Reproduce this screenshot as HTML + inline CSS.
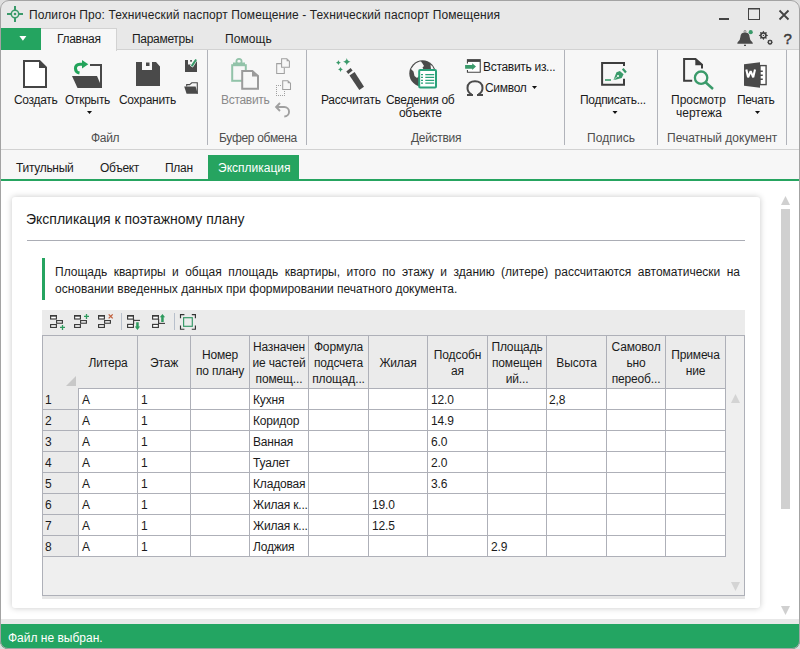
<!DOCTYPE html>
<html><head><meta charset="utf-8">
<style>
*{box-sizing:border-box}
html,body{margin:0;padding:0}
body{width:800px;height:649px;overflow:hidden;position:relative;background:#fff;font-family:"Liberation Sans",sans-serif;font-size:12px;color:#1b1b1b}
.a{position:absolute;white-space:nowrap;line-height:14px}
.b{position:absolute}
#frame{position:absolute;left:0;top:0;width:800px;height:649px;border:1px solid #a3a3a3;border-radius:9px 9px 8px 8px;box-shadow:0 0 0 12px #dedede;z-index:100;pointer-events:none}
.sep{position:absolute;width:1px;background:#b1b3ba}
.rl{letter-spacing:-0.3px}
.gl{color:#4e4e4e;letter-spacing:-0.3px}
.vl{position:absolute;width:1px;background:#aeb0b8}
.hl{position:absolute;height:1px;background:#aeb0b8}
.hd{position:absolute;text-align:center;line-height:16px;white-space:nowrap;letter-spacing:-0.15px}
.cell{position:absolute;white-space:nowrap;line-height:14px;letter-spacing:-0.18px}
svg{position:absolute;overflow:visible}
</style></head><body>
<div class="b" style="left:0;top:0;width:800px;height:50px;background:#e8e8e8"></div>
<div class="b" style="left:0;top:49px;width:800px;height:101px;background:#f7f7f7;border-top:1px solid #d2d2d2;border-bottom:1px solid #d2d2d2"></div>
<div class="b" style="left:0;top:150px;width:800px;height:29px;background:#f7f7f7"></div>
<div class="b" style="left:0;top:179px;width:800px;height:2px;background:#26a460"></div>
<div class="b" style="left:0;top:619px;width:800px;height:5px;background:#e8e8e8"></div>
<div class="b" style="left:0;top:624px;width:800px;height:25px;background:#23a562"></div>
<div class="a" style="left:29px;top:8px;letter-spacing:0.1px;color:#222">Полигон Про: Технический паспорт Помещение - Технический паспорт Помещения</div>
<div class="b" style="left:1px;top:28px;width:40px;height:22px;background:#24a460"></div>
<div class="b" style="left:41px;top:28px;width:76px;height:23px;background:#f7f7f7;border:1px solid #d2d2d2;border-bottom:none;border-left:none"></div>
<div class="a rl" style="left:57px;top:32px;">Главная</div>
<div class="a rl" style="left:132px;top:32px;">Параметры</div>
<div class="a rl" style="left:225px;top:32px;letter-spacing:0.1px">Помощь</div>
<div class="a rl" style="left:14px;top:93px;">Создать</div>
<div class="a rl" style="left:65px;top:93px;">Открыть</div>
<div class="a rl" style="left:119px;top:93px;">Сохранить</div>
<div class="a rl" style="left:221px;top:93px;color:#8a8a8a">Вставить</div>
<div class="a rl" style="left:321px;top:93px;">Рассчитать</div>
<div class="a rl" style="left:386px;top:93px;">Сведения об</div>
<div class="a rl" style="left:399px;top:106px;">объекте</div>
<div class="a rl" style="left:483px;top:60px;">Вставить из...</div>
<div class="a rl" style="left:485px;top:81px;">Символ</div>
<div class="a rl" style="left:580px;top:93px;">Подписать...</div>
<div class="a rl" style="left:671px;top:93px;letter-spacing:0">Просмотр</div>
<div class="a rl" style="left:676px;top:106px;letter-spacing:0">чертежа</div>
<div class="a rl" style="left:737px;top:93px;">Печать</div>
<div class="a gl" style="left:91px;top:131px;">Файл</div>
<div class="a gl" style="left:219px;top:131px;">Буфер обмена</div>
<div class="a gl" style="left:411px;top:131px;">Действия</div>
<div class="a gl" style="left:587px;top:131px;letter-spacing:0.1px">Подпись</div>
<div class="a gl" style="left:667px;top:131px;letter-spacing:0">Печатный документ</div>
<div class="sep" style="left:207px;top:50px;height:95px"></div>
<div class="sep" style="left:306px;top:50px;height:95px"></div>
<div class="sep" style="left:564px;top:50px;height:95px"></div>
<div class="sep" style="left:657px;top:50px;height:95px"></div>
<div class="sep" style="left:786px;top:50px;height:95px"></div>
<div class="a rl" style="left:16px;top:161px">Титульный</div>
<div class="a rl" style="left:100px;top:161px">Объект</div>
<div class="a rl" style="left:165px;top:161px">План</div>
<div class="b" style="left:208px;top:155px;width:91px;height:25px;background:#26a460"></div>
<div class="a rl" style="left:218px;top:161px;color:#fff;letter-spacing:0">Экспликация</div>
<div class="b" style="left:12px;top:197px;width:748px;height:411px;background:#fff;border-radius:3px;box-shadow:0 0 6px rgba(0,0,0,0.22)"></div>
<div class="a" style="left:26px;top:211px;font-size:14px;line-height:16px;color:#1b1b1b">Экспликация к поэтажному плану</div>
<div class="b" style="left:27px;top:240px;width:718px;height:1px;background:#abadb5"></div>
<div class="b" style="left:42px;top:258px;width:3px;height:42px;background:#26a460"></div>
<div class="a" style="left:55px;top:264px;width:685px;line-height:16px;text-align:justify;text-align-last:justify;white-space:normal">Площадь квартиры и общая площадь квартиры, итого по этажу и зданию (литере) рассчитаются автоматически на</div>
<div class="a" style="left:55px;top:281px;line-height:16px">основании введенных данных при формировании печатного документа.</div>
<div class="b" style="left:42px;top:310px;width:703px;height:25px;background:#ebebeb"></div>
<div class="b" style="left:42px;top:335px;width:703px;height:261px;background:#efefef;border:1px solid #aeb0b8"></div>
<div class="b" style="left:79px;top:389px;width:646px;height:167px;background:#fff"></div>
<div class="b" style="left:43px;top:336px;width:683px;height:52px;background:#ebebeb"></div>
<div class="b" style="left:43px;top:388px;width:35px;height:168px;background:#ebebeb"></div>
<div class="b" style="left:42px;top:596px;width:703px;height:3px;background:#e6e6e6"></div>
<div class="vl" style="left:78px;top:389px;height:168px"></div>
<div class="vl" style="left:137px;top:336px;height:221px"></div>
<div class="vl" style="left:190px;top:336px;height:221px"></div>
<div class="vl" style="left:249px;top:336px;height:221px"></div>
<div class="vl" style="left:308px;top:336px;height:221px"></div>
<div class="vl" style="left:368px;top:336px;height:221px"></div>
<div class="vl" style="left:427px;top:336px;height:221px"></div>
<div class="vl" style="left:487px;top:336px;height:221px"></div>
<div class="vl" style="left:546px;top:336px;height:221px"></div>
<div class="vl" style="left:606px;top:336px;height:221px"></div>
<div class="vl" style="left:665px;top:336px;height:221px"></div>
<div class="vl" style="left:725px;top:336px;height:221px"></div>
<div class="vl" style="left:725px;top:336px;height:221px"></div>
<div class="hl" style="left:78px;top:388px;width:648px"></div>
<div class="hl" style="left:43px;top:409px;width:683px"></div>
<div class="hl" style="left:43px;top:430px;width:683px"></div>
<div class="hl" style="left:43px;top:451px;width:683px"></div>
<div class="hl" style="left:43px;top:472px;width:683px"></div>
<div class="hl" style="left:43px;top:493px;width:683px"></div>
<div class="hl" style="left:43px;top:514px;width:683px"></div>
<div class="hl" style="left:43px;top:535px;width:683px"></div>
<div class="hl" style="left:43px;top:556px;width:683px"></div>
<svg style="left:66px;top:376px" width="10" height="10"><path d="M10 0 L10 10 L0 10 Z" fill="#c8c8c8"/></svg>
<div class="hd" style="left:79px;top:355.2px;width:58px">Литера</div>
<div class="hd" style="left:138px;top:355.2px;width:52px">Этаж</div>
<div class="hd" style="left:191px;top:347.2px;width:58px">Номер<br>по плану</div>
<div class="hd" style="left:250px;top:339.2px;width:58px">Назначен<br>ие частей<br>помещ...</div>
<div class="hd" style="left:309px;top:339.2px;width:59px">Формула<br>подсчета<br>площад...</div>
<div class="hd" style="left:369px;top:355.2px;width:58px">Жилая</div>
<div class="hd" style="left:428px;top:347.2px;width:59px">Подсобн<br>ая</div>
<div class="hd" style="left:488px;top:339.2px;width:58px">Площадь<br>помещен<br>ий...</div>
<div class="hd" style="left:547px;top:355.2px;width:59px">Высота</div>
<div class="hd" style="left:607px;top:339.2px;width:58px">Самовол<br>ьно<br>переоб...</div>
<div class="hd" style="left:666px;top:347.2px;width:59px">Примеча<br>ние</div>
<div class="cell" style="left:45px;top:392.8px">1</div>
<div class="cell" style="left:82px;top:392.8px">A</div>
<div class="cell" style="left:141px;top:392.8px">1</div>
<div class="cell" style="left:253px;top:392.8px">Кухня</div>
<div class="cell" style="left:431px;top:392.8px">12.0</div>
<div class="cell" style="left:549px;top:392.8px">2,8</div>
<div class="cell" style="left:45px;top:413.8px">2</div>
<div class="cell" style="left:82px;top:413.8px">A</div>
<div class="cell" style="left:141px;top:413.8px">1</div>
<div class="cell" style="left:253px;top:413.8px">Коридор</div>
<div class="cell" style="left:431px;top:413.8px">14.9</div>
<div class="cell" style="left:45px;top:434.8px">3</div>
<div class="cell" style="left:82px;top:434.8px">A</div>
<div class="cell" style="left:141px;top:434.8px">1</div>
<div class="cell" style="left:253px;top:434.8px">Ванная</div>
<div class="cell" style="left:431px;top:434.8px">6.0</div>
<div class="cell" style="left:45px;top:455.8px">4</div>
<div class="cell" style="left:82px;top:455.8px">A</div>
<div class="cell" style="left:141px;top:455.8px">1</div>
<div class="cell" style="left:253px;top:455.8px">Туалет</div>
<div class="cell" style="left:431px;top:455.8px">2.0</div>
<div class="cell" style="left:45px;top:476.8px">5</div>
<div class="cell" style="left:82px;top:476.8px">A</div>
<div class="cell" style="left:141px;top:476.8px">1</div>
<div class="cell" style="left:253px;top:476.8px">Кладовая</div>
<div class="cell" style="left:431px;top:476.8px">3.6</div>
<div class="cell" style="left:45px;top:497.8px">6</div>
<div class="cell" style="left:82px;top:497.8px">A</div>
<div class="cell" style="left:141px;top:497.8px">1</div>
<div class="cell" style="left:253px;top:497.8px">Жилая к...</div>
<div class="cell" style="left:372px;top:497.8px">19.0</div>
<div class="cell" style="left:45px;top:518.8px">7</div>
<div class="cell" style="left:82px;top:518.8px">A</div>
<div class="cell" style="left:141px;top:518.8px">1</div>
<div class="cell" style="left:253px;top:518.8px">Жилая к...</div>
<div class="cell" style="left:372px;top:518.8px">12.5</div>
<div class="cell" style="left:45px;top:539.8px">8</div>
<div class="cell" style="left:82px;top:539.8px">A</div>
<div class="cell" style="left:141px;top:539.8px">1</div>
<div class="cell" style="left:253px;top:539.8px">Лоджия</div>
<div class="cell" style="left:491px;top:539.8px">2.9</div>
<svg style="left:731px;top:394px" width="9" height="9"><path d="M4.5 0 L9 9 L0 9 Z" fill="#d4d4d4"/></svg>
<svg style="left:731px;top:582px" width="9" height="9"><path d="M0 0 L9 0 L4.5 9 Z" fill="#d4d4d4"/></svg>
<svg style="left:781px;top:196px" width="9" height="9"><path d="M4.5 0 L9 9 L0 9 Z" fill="#d0d0d0"/></svg>
<div class="b" style="left:781px;top:209px;width:9px;height:300px;background:#d0d0d0"></div>
<svg style="left:781px;top:606px" width="9" height="9"><path d="M0 0 L9 0 L4.5 9 Z" fill="#d0d0d0"/></svg>
<div class="a" style="left:8px;top:631px;color:#fff">Файл не выбран.</div>
<svg style="left:0;top:0;z-index:5" width="800" height="649" viewBox="0 0 800 649">
<!-- app icon -->
<g fill="none" stroke="#3a9a6a">
  <circle cx="15" cy="14" r="3.7" stroke-width="1.5"/>
  <path d="M15 6V10.5M15 17.5V22M7 14H11.5M18.5 14H23" stroke-width="2"/>
</g>
<circle cx="15" cy="14" r="1.3" fill="#3a9a6a"/>
<!-- window controls -->
<rect x="719" y="18" width="10" height="2" fill="#444"/>
<rect x="748.5" y="8.5" width="11" height="11" fill="none" stroke="#444" stroke-width="1"/>
<rect x="748" y="8" width="12" height="1.5" fill="#444"/>
<path d="M779.5 10.5L788.5 19.5M788.5 10.5L779.5 19.5" stroke="#444" stroke-width="1.8"/>
<!-- bell -->
<path d="M737.3 43.7L737.6 42.3Q740.3 40.5 740.4 37Q740.6 32.6 745 32.6Q749.4 32.6 749.6 37Q749.7 40.5 752.4 42.3L752.9 43.7Z" fill="#4a4a4a"/>
<circle cx="745" cy="31.4" r="1" fill="none" stroke="#777" stroke-width="0.8"/>
<rect x="744" y="44.7" width="2" height="1.3" fill="#4a4a4a"/>
<circle cx="750.7" cy="32.2" r="2.1" fill="#3a9a6a"/>
<!-- gears -->
<path d="M763.40 30.70L764.62 32.44L766.72 32.08L766.36 34.18L768.10 35.40L766.36 36.62L766.72 38.72L764.62 38.36L763.40 40.10L762.18 38.36L760.08 38.72L760.44 36.62L758.70 35.40L760.44 34.18L760.08 32.08L762.18 32.44Z" fill="#3f3f3f"/>
<circle cx="763.4" cy="35.4" r="1.7" fill="#e8e8e8"/>
<circle cx="763.4" cy="35.4" r="0.7" fill="#3f3f3f"/>
<path d="M770.00 39.20L770.84 40.17L772.12 40.08L772.03 41.36L773.00 42.20L772.03 43.04L772.12 44.32L770.84 44.23L770.00 45.20L769.16 44.23L767.88 44.32L767.97 43.04L767.00 42.20L767.97 41.36L767.88 40.08L769.16 40.17Z" fill="#3f3f3f"/>
<circle cx="770" cy="42.2" r="1.1" fill="#d8d8d8"/>
<text x="783.4" y="43.8" font-family="Liberation Sans" font-size="15" fill="#3a3a3a" stroke="#3a3a3a" stroke-width="0.45">?</text>
<!-- dropdown arrows -->
<g fill="#111">
<path d="M87 111H92L89.5 114Z"/>
<path d="M532 86H537L534.5 89Z"/>
<path d="M612.5 111H617.5L615 114Z"/>
<path d="M755 111H760L757.5 114Z"/>
</g>
<!-- green dropdown -->
<path d="M19.4 36H26.4L22.9 40.8Z" fill="#fff"/>

<!-- Создать doc -->
<path d="M24 61H39.5L46 67.5V87H24Z" fill="#fff" stroke="#444" stroke-width="2" stroke-linejoin="miter"/>
<path d="M39 61V68H46Z" fill="#444"/>
<!-- Открыть -->
<path d="M90 65H101V88" fill="none" stroke="#484848" stroke-width="2"/>
<path d="M72 76H97L100 83V88H77.5Z" fill="#484848"/>
<path d="M79.5 73C74.5 72 73.5 65 80 64.3H84" fill="none" stroke="#22a35a" stroke-width="3"/>
<path d="M82 60L88.3 64.3L82 68.6Z" fill="#22a35a"/>
<!-- Сохранить -->
<path d="M136 62H142V70H152V62H156L160 66.5V86H136Z" fill="#4a4a4a"/>
<rect x="146" y="62.5" width="3.5" height="3.5" fill="#4a4a4a"/>
<!-- small save-as -->
<path d="M185 60H188V64.4H191.5L195 62V60H197V72H185Z" fill="#4a4a4a"/>
<rect x="190.2" y="60" width="1.7" height="1.7" fill="#4a4a4a"/>
<path d="M191.4 66.6L196 59.4" stroke="#fff" stroke-width="3.4"/>
<path d="M191.7 66.2L196.1 59.5" stroke="#3a9a6a" stroke-width="2.1"/>
<!-- small folder -->
<path d="M186.7 86.4V84.6H189.6L191.8 82.8H197.3V93.7" fill="none" stroke="#4a4a4a" stroke-width="1.1"/>
<path d="M184.2 86.4H195.6L197.8 93.8H186.6Z" fill="#4a4a4a"/>
<!-- Вставить (disabled) -->
<rect x="232.2" y="65.2" width="13.6" height="15.6" fill="none" stroke="#92c3a9" stroke-width="2"/>
<rect x="233" y="62.5" width="12" height="3" fill="#92c3a9"/>
<circle cx="239" cy="61.5" r="2.6" fill="none" stroke="#92c3a9" stroke-width="1.8"/>
<path d="M242.2 71.1H252.4L258 76V88.8H242.2Z" fill="#f7f7f7" stroke="#9b9b9b" stroke-width="2"/>
<path d="M252 71V76.5H258Z" fill="#9b9b9b"/>
<!-- copy -->
<g fill="none" stroke="#a0a0a0" stroke-width="1.05">
<path d="M281.4 63.6H276.7V73.4H284.3V67.9"/>
<path d="M281.6 58.7H286.8L289.4 61.2V67.2H281.6Z" fill="#f7f7f7"/>
<path d="M282.7 80.7H287.8L290.5 83.2V89.4H282.7Z" fill="#f7f7f7"/>
<path d="M276.6 107H284.3A4.75 4.75 0 0 1 284.3 116.5" stroke-width="1.9"/>
<path d="M280 103L276.1 107L280 111" stroke-width="1.9"/>
</g>
<path d="M286.6 58.8V61.3H289.3Z" fill="#a0a0a0"/>
<path d="M287.7 80.8V83.3H290.4Z" fill="#a0a0a0"/>
<path fill="#a0a0a0" d="M276 85h1v1h-1zM278 85h1v1h-1zM280 85h1v1h-1zM276 87h1v1h-1zM276 89h1v1h-1zM276 91h1v1h-1zM276 93h1v1h-1zM276 95h1v1h-1zM278 95h1v1h-1zM280 95h1v1h-1zM282 95h1v1h-1zM284 95h1v1h-1zM284 93h1v1h-1zM284 91h1v1h-1z"/>
<!-- wand -->
<path d="M346.3 71.6L350.6 68L352.6 70.5L348.3 73.9Z" fill="#4a4a4a"/>
<path d="M349.5 75.6L354.6 72L364 86.8L359.3 90Z" fill="#4a4a4a"/>
<g fill="#3a9a6a">
<path d="M346.8 58.1Q347.3 61.3 350.5 61.8Q347.3 62.3 346.8 65.5Q346.3 62.3 343.1 61.8Q346.3 61.3 346.8 58.1Z"/>
<path d="M338.4 60.3Q338.8 62.3 340.8 62.7Q338.8 63.1 338.4 65.1Q338 63.1 336 62.7Q338 62.3 338.4 60.3Z"/>
<path d="M340.5 67.1Q340.9 69.1 342.9 69.5Q340.9 69.9 340.5 71.9Q340.1 69.9 338.1 69.5Q340.1 69.1 340.5 67.1Z"/>
</g>

<!-- globe -->
<circle cx="422.5" cy="73.5" r="13.2" fill="#4a4a4a"/>
<path d="M413 66.5C414.5 64 418 61.5 421 61.5L422.5 63.5L424 66L422.5 67.5L423.5 69.5L422 71.5L420 72L419 76L417 78L414.5 76L413.5 71.5L411 69Z" fill="#f7f7f7"/>
<path d="M430.5 64.5L432.5 66.5L434 69.5L431 69.5Z" fill="#f7f7f7"/>
<rect x="419.2" y="70.1" width="16.8" height="17.5" rx="1" fill="#fff" stroke="#2aa27a" stroke-width="2"/>
<g stroke="#2aa27a" stroke-width="1.3">
<path d="M421 74.6H423M425.3 74.6H434.2M421 77.4H423M425.3 77.4H434.2M421 80.3H423M425.3 80.3H434.2M421 83.2H423M425.3 83.2H434.2"/>
</g>

<!-- insert from -->
<rect x="467.5" y="61" width="12.8" height="11.3" fill="#fff"/>
<path d="M467.45 63.5V61.5M467.45 70V72.25H480.25V61.5" fill="none" stroke="#444" stroke-width="1.1"/>
<rect x="466.9" y="59.1" width="13.9" height="2.8" fill="#444"/>
<path d="M465.1 64.9H472.2V63.2L476 66.6L472.2 70V68.8H465.1Z" fill="#3a9a6a"/>
<!-- omega -->
<path d="M471 95V94C467.5 92 467.5 88.5 467.5 88C467.5 83.3 471 81.2 475 81.2C479 81.2 482.5 83.3 482.5 88C482.5 88.5 482.5 92 479 94V95" fill="none" stroke="#4a4a4a" stroke-width="2"/>
<path d="M467 95H473M477 95H483" stroke="#4a4a4a" stroke-width="2"/>

<!-- sign -->
<path d="M624 66V63.1H602.1V84.8H624V78.8" fill="none" stroke="#3d3d3d" stroke-width="2"/>
<path d="M605 80H611" stroke="#3a9a6a" stroke-width="1.6"/>
<path d="M613.5 79.8L616.5 72.3L619.9 71.1L623.6 74.2L621.7 77.9L615.5 79.8Z" fill="#3a9a6a"/>
<circle cx="618" cy="76" r="1" fill="#fff"/>
<path d="M614.2 79.2L617.4 76.6" stroke="#f7f7f7" stroke-width="0.6"/>
<path d="M621.9 69.5L623.6 68L626.8 71.7L625.1 73.2Z" fill="#3a9a6a"/>
<!-- preview -->
<path d="M692.2 80.8H684.1V59.1H695.5L702 64.8V68.6" fill="none" stroke="#3d3d3d" stroke-width="2"/>
<path d="M695.3 59V65.2H702Z" fill="#3d3d3d"/>
<circle cx="701.1" cy="77.7" r="6.2" fill="none" stroke="#3a9a6a" stroke-width="2.3"/>
<path d="M705.5 82.3L713 89" stroke="#3a9a6a" stroke-width="2.5"/>

<!-- word -->
<path d="M744 64.2L760 62.3V87.7L744 85.8Z" fill="#4a4a4a"/>
<rect x="760" y="65.6" width="6.1" height="19" fill="#fff" stroke="#4a4a4a" stroke-width="1.4"/>
<path d="M760 71.2H762.8M760 75.2H762.8M760 79.2H762.8" stroke="#4a4a4a" stroke-width="1.6"/>
<path d="M746.3 69.5L748.1 77.3L750.65 71.2L753.2 77.3L755 69.5" fill="none" stroke="#fff" stroke-width="2.1" stroke-linejoin="bevel"/>

<!-- grid toolbar icons -->
<defs>
<g id="boxes3">
<rect x="50.6" y="315.6" width="5.8" height="3.4" fill="#fff" stroke="#3a3a3a" stroke-width="1.15"/>
<rect x="56.6" y="320.6" width="5.8" height="2.6" fill="#fff" stroke="#3a3a3a" stroke-width="1.15"/>
<rect x="50.6" y="324.6" width="5.8" height="2.8" fill="#fff" stroke="#3a3a3a" stroke-width="1.15"/>
<rect x="50" y="315" width="7" height="1.6" fill="#3a3a3a"/>
</g>
<g id="boxes2">
<rect x="127.6" y="315.6" width="5.8" height="3.5" fill="#fff" stroke="#3a3a3a" stroke-width="1.15"/>
<rect x="127.6" y="324.4" width="5.8" height="3" fill="#fff" stroke="#3a3a3a" stroke-width="1.15"/>
<rect x="127" y="315" width="7" height="1.6" fill="#3a3a3a"/>
<path d="M133.6 319V324" stroke="#3a3a3a" stroke-width="1.15"/>
</g>
</defs>
<use href="#boxes3"/>
<use href="#boxes3" x="24"/>
<use href="#boxes3" x="48"/>
<path d="M60 327.4H65M62.5 325V330" stroke="#2e9a5e" stroke-width="1.3"/>
<path d="M84 316.4H89M86.5 314V319" stroke="#2e9a5e" stroke-width="1.3"/>
<path d="M108.7 314.4L112.7 318.4M112.7 314.4L108.7 318.4" stroke="#c0603d" stroke-width="1.3"/>
<rect x="121" y="313" width="1" height="17" fill="#b8c0cc"/>
<use href="#boxes2"/>
<use href="#boxes2" x="25"/>
<path d="M134 320.4H140" stroke="#3a3a3a" stroke-width="1.1"/>
<path d="M159 323.4H165" stroke="#3a3a3a" stroke-width="1.1"/>
<path d="M136.2 322.2H138.7V326.4H140.1L137.45 329.9L134.8 326.4H136.2Z" fill="#2e9a5e"/>
<path d="M161.2 321.9H163.7V317.3H165.1L162.45 313.9L159.8 317.3H161.2Z" fill="#2e9a5e"/>
<rect x="174" y="313" width="1" height="17" fill="#b8c0cc"/>
<path d="M180.5 318.2V314.6H184.4M191.8 314.6H195.4V318.2M195.4 325.6V329.2H191.8M184.4 329.2H180.5V325.6" fill="none" stroke="#333" stroke-width="1.15"/>
<rect x="183.6" y="317.7" width="8.7" height="8.6" fill="none" stroke="#3a9a6a" stroke-width="1.2"/>
</svg>

<div id="frame"></div>
</body></html>
